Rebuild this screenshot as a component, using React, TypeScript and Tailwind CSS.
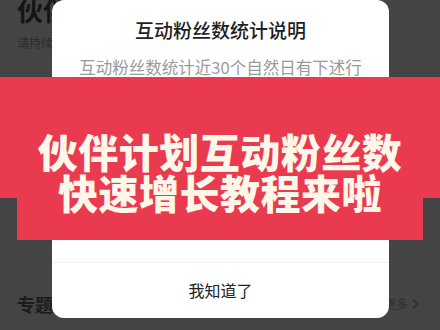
import React from "react";

const CJK = { fontFamily: '"Noto Sans CJK SC", "Noto Sans", sans-serif' };

function BackgroundPage() {
  return (
    <div className="flex h-full flex-col px-[17px]">
      <div className="-mt-[7px] text-[26px] font-bold leading-[34px] text-[#151515]">伙伴计划</div>
      <div className="mt-[8px] text-[12px] leading-[16px] text-[#2c2c2c]">请持续关注</div>
      <div className="flex-1" />
      <div className="mb-[14px] flex items-center justify-between">
        <span className="text-[18px] font-bold leading-[24px] text-[#1c1c1c]">专题</span>
        <span className="flex items-center gap-[3px] pr-[4px] text-[12px] text-[#2f2f2f]">
          更多
          <svg width="8" height="12" viewBox="0 0 8 12" fill="none">
            <path d="M2 1.5 6.5 6 2 10.5" stroke="#2f2f2f" strokeWidth="1.6" />
          </svg>
        </span>
      </div>
    </div>
  );
}

function Dialog() {
  return (
    <div className="absolute left-[52px] top-0 flex h-[318px] w-[337px] flex-col rounded-[12px] bg-white">
      <div className="pt-[18px] text-center text-[19px] font-medium leading-[24px] text-[#1f1f1f]">
        互动粉丝数统计说明
      </div>
      <div className="mt-[14px] h-[22px] overflow-hidden px-[27px] text-center text-[16.5px] leading-[22px] text-[#9a9a9a]">
        互动粉丝数统计近30个自然日有下述行为的粉丝
      </div>
      <div className="flex-1" />
      <div className="flex h-[56px] items-center justify-center border-t border-[#f1f1f1] pb-[2px] text-[16px] text-[#222]">
        我知道了
      </div>
    </div>
  );
}

function Banner() {
  return (
    <div className="absolute left-0 top-[77px] w-[440px]">
      <div className="flex h-[121px] flex-col items-center justify-end bg-[#e93a4f]">
        <div className="translate-y-[15px] text-center text-[40px] font-black leading-[41px] tracking-[0.5px] text-[#fff7ea]">
          <div>伙伴计划互动粉丝数</div>
          <div>快速增长教程来啦</div>
        </div>
      </div>
      <div className="mx-[17px] h-[42px] bg-[#e93a4f]" />
    </div>
  );
}

export default function App() {
  return (
    <div className="relative h-[330px] w-[440px] overflow-hidden bg-[#444444]" style={CJK}>
      <BackgroundPage />
      <Dialog />
      <Banner />
    </div>
  );
}
